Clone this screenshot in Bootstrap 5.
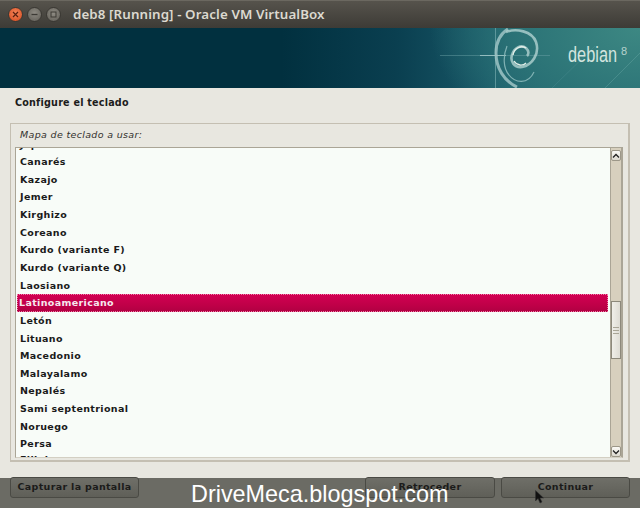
<!DOCTYPE html>
<html lang="es">
<head>
<meta charset="utf-8">
<title>deb8</title>
<link href="https://cdn.jsdelivr.net/npm/bootstrap@5.3.0/dist/css/bootstrap.min.css" rel="stylesheet">
<style>
html,body{width:640px;height:508px;overflow:hidden;margin:0;background:#e8e7e0}
.vm-win{width:640px;height:508px;position:relative;overflow:hidden;background:#e8e7e0;font-family:"DejaVu Sans",sans-serif}
.vm-title{height:28px;background:linear-gradient(#56534c,#3d3b36);padding-left:8px;gap:4px;border-top:1px solid #6b6860}
.wbtn{width:15px;height:15px;border-radius:50%;background:radial-gradient(circle at 50% 40%,#8e8b83,#5f5c55);border:1px solid #3a3833;color:#3c3a35}
.wbtn svg{display:block}
.wbtn-x{background:radial-gradient(circle at 50% 40%,#f5865a,#d4481c)}
.vm-name{font-family:"Noto Sans","DejaVu Sans",sans-serif;font-weight:600;font-size:13.350px;color:#dcd9d0;margin-left:8px;white-space:nowrap;letter-spacing:.1px}
.vm-banner{height:60px;background:radial-gradient(ellipse 210px 130px at 640px 0,#3d8883 0,#2c7477 55%,rgba(30,95,105,0) 100%),linear-gradient(90deg,#01303f 0,#01303f 44%,#0a3f50 62%,#1c5f6d 80%,#2b7175 100%);position:relative;overflow:hidden}
.deb-art{position:absolute;left:440px;top:0;width:200px;height:60px}
.deb-word{position:absolute;left:568px;top:13px;font-family:"Liberation Sans",sans-serif;font-size:21.5px;line-height:28px;color:#d2e4df;white-space:nowrap;transform:scaleX(.76);transform-origin:0 50%}
.deb-num{position:absolute;left:621px;top:17px;font-family:"Liberation Sans",sans-serif;font-size:11px;line-height:12px;color:#b7d2cd}
.vm-body{height:390px;padding:9px 10px 0 10px}
.vm-h{font-size:9.6px;font-weight:700;color:#1c1c1c;margin:0 0 0 5px;line-height:12px;letter-spacing:.22px}
.vm-frame{margin-top:14px;height:339px;border:1px solid #c4bfb2;border-right-width:2px;border-bottom-width:2px;padding:0 5px 0 4px}
.vm-lab{font-size:9.5px;font-style:italic;color:#33322e;height:23px;line-height:21px;padding-left:5px;letter-spacing:.33px}
.vm-listbox{height:311px;border:1px solid #aaa596;border-bottom-color:#d3cfc3;background:#f8fcf8}
.vm-rows{flex:1 1 auto;overflow:hidden;min-width:0;position:relative}
.vm-rows ul{margin:-12.500px 0 0 0;padding:0;list-style:none}
.vm-rows li{height:17.650px;line-height:17.650px;padding-left:4px;font-size:9.5px;font-weight:700;color:#1a1a1a;letter-spacing:.36px;white-space:nowrap}
.vm-rows li.sel{background:linear-gradient(#d30053,#c00048 60%,#b00042);color:#f6e9ee;outline:1px dotted #ef7fa8;outline-offset:-1px;margin:0 2px 0 1px;padding-left:2px}
.vm-rows li.cut{line-height:14px}
.vm-sb{width:12px;background:#d7d0be;border-left:1px solid #aaa596;border-right:1px solid #aaa596}
.sb-btn{height:11px;background:linear-gradient(#fbfaf6,#dcd9cf);border:1px solid #9c9788;border-radius:2px;color:#222;flex:0 0 auto}
.sb-up{margin-top:2px}
.sb-btn svg{display:block}
.sb-thumb{height:58px;margin-top:140px;background:linear-gradient(90deg,#f0efe9,#dedcd4);border:1px solid #8d897b;flex:0 0 auto}
.sb-fill{flex:1 1 auto}
.grip{width:6px;height:1px;background:#a9a596;margin:1px 0}
.vm-strip{position:absolute;left:0;right:0;top:478px;height:30px;background:#6b6b64;padding:0 10px}
.strip-btn{position:absolute;top:-1px;height:21px;background:linear-gradient(#6f6f68,#5f5f58);border:1px solid #4a4a44;border-radius:3px;font-size:9.5px;font-weight:700;color:#1b1b1a;letter-spacing:.33px;line-height:17px;text-align:center;padding:0 0 3px 0}
.btn-cap{left:10px;width:129px}
.btn-back{left:365px;width:130px}
.btn-next{left:501px;width:129px}
.wm{position:absolute;left:191px;top:3px;font-family:"Liberation Sans",sans-serif;font-size:23.4px;color:#fff;line-height:26px;white-space:nowrap}
.cursor{position:absolute;left:535px;top:12px;width:10px;height:14px}
</style>
</head>
<body>
<div class="vm-win">
  <div class="vm-title d-flex align-items-center">
    <span class="wbtn wbtn-x d-flex align-items-center justify-content-center"><svg width="7" height="7" viewBox="0 0 7 7"><path d="M1 1l5 5M6 1l-5 5" stroke="#5a2010" stroke-width="1.2"/></svg></span>
    <span class="wbtn d-flex align-items-center justify-content-center"><svg width="7" height="7" viewBox="0 0 7 7"><path d="M0.5 3.5h6" stroke="#3c3a35" stroke-width="1.3"/></svg></span>
    <span class="wbtn d-flex align-items-center justify-content-center"><svg width="7" height="7" viewBox="0 0 7 7"><rect x="1" y="1" width="5" height="5" fill="none" stroke="#3c3a35"/></svg></span>
    <span class="vm-name">deb8 [Running] - Oracle VM VirtualBox</span>
  </div>
  <div class="vm-banner">
    <svg class="deb-art" viewBox="0 0 200 60" fill="none">
      <path d="M0 27.500H110" stroke="#6fa3a8" stroke-width="1" opacity=".45"/>
      <path d="M40 27.500H66" stroke="#b5d6d6" stroke-width="1" opacity=".7"/>
      <path d="M55.500 0V60" stroke="#8bbcbe" stroke-width="1" opacity=".55"/>
      <path d="M68 1C60 6 56 15 56 25C56 40 64 53 77 59" stroke="#9fc4c5" stroke-width="3" opacity=".85"/>
      <path d="M66 4C76 0 92 3 96 14C100 26 92 37 82 39C74 40 70 33 72 27C74 20 81 16 86 20C89 23 89 26 87 28" stroke="#a9cccb" stroke-width="2.600" opacity=".85"/>
      <path d="M73 27C74 20 81 17 86 20" stroke="#e2efe9" stroke-width="1.300"/>
      <path d="M74 33C77 38 83 38 86 35" stroke="#e2efe9" stroke-width="1.300"/>
      <path d="M67 18C63 28 63 40 69 47C75 55 88 57 94 44" stroke="#8ab9ba" stroke-width="1.200" opacity=".9"/>
      <path d="M112 60L155 18" stroke="#6eacad" stroke-width="1" opacity=".2"/>
      <path d="M165 60L200 25" stroke="#8cc3c1" stroke-width="1" opacity=".25"/>
    </svg>
    <span class="deb-word">debian</span>
    <span class="deb-num">8</span>
  </div>
  <div class="vm-body">
    <h1 class="vm-h">Configure el teclado</h1>
    <div class="vm-frame">
      <div class="vm-lab">Mapa de teclado a usar:</div>
      <div class="vm-listbox d-flex">
        <div class="vm-rows">
          <ul>
            <li>Japonés</li>
            <li>Canarés</li>
            <li>Kazajo</li>
            <li>Jemer</li>
            <li>Kirghizo</li>
            <li>Coreano</li>
            <li>Kurdo (variante F)</li>
            <li>Kurdo (variante Q)</li>
            <li>Laosiano</li>
            <li class="sel">Latinoamericano</li>
            <li>Letón</li>
            <li>Lituano</li>
            <li>Macedonio</li>
            <li>Malayalamo</li>
            <li>Nepalés</li>
            <li>Sami septentrional</li>
            <li>Noruego</li>
            <li>Persa</li>
            <li class="cut">Filipino</li>
          </ul>
        </div>
        <div class="vm-sb d-flex flex-column">
          <div class="sb-btn sb-up d-flex align-items-center justify-content-center"><svg width="8" height="6" viewBox="0 0 8 6"><path d="M1 4.500L4 1.500L7 4.500" fill="none" stroke="#222" stroke-width="1.300"/></svg></div>
          <div class="sb-thumb d-flex flex-column align-items-center justify-content-center"><span class="grip"></span><span class="grip"></span><span class="grip"></span></div>
          <div class="sb-fill"></div>
          <div class="sb-btn d-flex align-items-center justify-content-center"><svg width="8" height="6" viewBox="0 0 8 6"><path d="M1 1.500L4 4.500L7 1.500" fill="none" stroke="#222" stroke-width="1.300"/></svg></div>
        </div>
      </div>
    </div>
  </div>
  <div class="vm-strip">
    <button type="button" class="strip-btn btn-cap">Capturar la pantalla</button>
    <button type="button" class="strip-btn btn-back">Retroceder</button>
    <button type="button" class="strip-btn btn-next">Continuar</button>
    <span class="wm">DriveMeca.blogspot.com</span>
    <svg class="cursor" viewBox="0 0 10 14"><path d="M0.500 0.500V11L3 8.500L5 13L7 12L5 8H8.500Z" fill="#111" stroke="#333" stroke-width=".5"/></svg>
  </div>
</div>
<script src="https://cdn.jsdelivr.net/npm/bootstrap@5.3.0/dist/js/bootstrap.bundle.min.js"></script>
</body>
</html>
